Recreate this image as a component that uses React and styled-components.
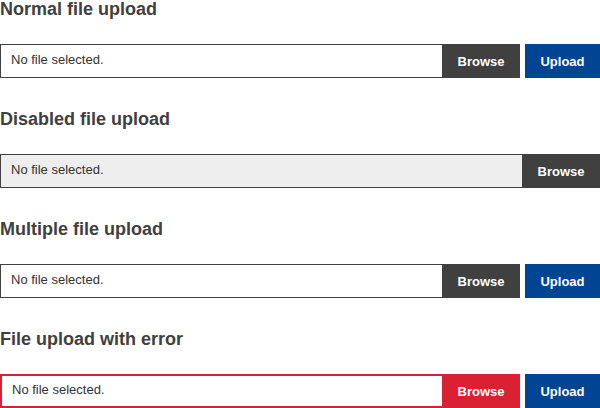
import styled, { createGlobalStyle } from "styled-components";

const GlobalStyle = createGlobalStyle`
  body {
    margin: 0;
    font-family: "Liberation Sans", Arial, sans-serif;
    background: #fff;
  }
`;

const sections = [
  { title: "Normal file upload", variant: "normal" },
  { title: "Disabled file upload", variant: "disabled" },
  { title: "Multiple file upload", variant: "normal" },
  { title: "File upload with error", variant: "error" },
];

export default function App() {
  return (
    <>
      <GlobalStyle />
      <Page>
        {sections.map((s) => (
          <Section key={s.title}>
            <Heading>{s.title}</Heading>
            <Row>
              <Field $variant={s.variant}>
                <FileName>No file selected.</FileName>
                <BrowseButton $variant={s.variant}>Browse</BrowseButton>
              </Field>
              {s.variant !== "disabled" && <UploadButton>Upload</UploadButton>}
            </Row>
          </Section>
        ))}
      </Page>
    </>
  );
}

const Page = styled.div`
  display: flex;
  flex-direction: column;
  gap: 32px;
  width: 600px;
`;

const Section = styled.div`
  display: flex;
  flex-direction: column;
`;

const Heading = styled.h2`
  margin: 0 0 26px;
  font-size: 18px;
  line-height: 18px;
  font-weight: 700;
  color: #404040;
`;

const Row = styled.div`
  display: flex;
  gap: 5px;
  height: 34px;
`;

const Field = styled.div`
  flex: 1;
  display: flex;
  align-items: stretch;
  box-sizing: border-box;
  height: 34px;
  border: ${(p) => (p.$variant === "error" ? "2px solid #da2131" : "1px solid #404040")};
  background: ${(p) => (p.$variant === "disabled" ? "#eeeeee" : "#fff")};
`;

const FileName = styled.span`
  flex: 1;
  display: flex;
  align-items: center;
  padding: 0 0 4px 10px;
  font-size: 13px;
  color: #333;
`;

const BrowseButton = styled.button`
  width: 78px;
  margin: ${(p) => (p.$variant === "error" ? "-2px -2px -2px 0" : "-1px -1px -1px 0")};
  border: none;
  background: ${(p) => (p.$variant === "error" ? "#da2131" : "#404040")};
  color: #fff;
  font-family: "Liberation Sans", Arial, sans-serif;
  font-size: 13px;
  font-weight: 700;
  padding: 0;
`;

const UploadButton = styled.button`
  width: 75px;
  border: none;
  background: #004494;
  color: #fff;
  font-family: "Liberation Sans", Arial, sans-serif;
  font-size: 13px;
  font-weight: 700;
  padding: 0;
`;
